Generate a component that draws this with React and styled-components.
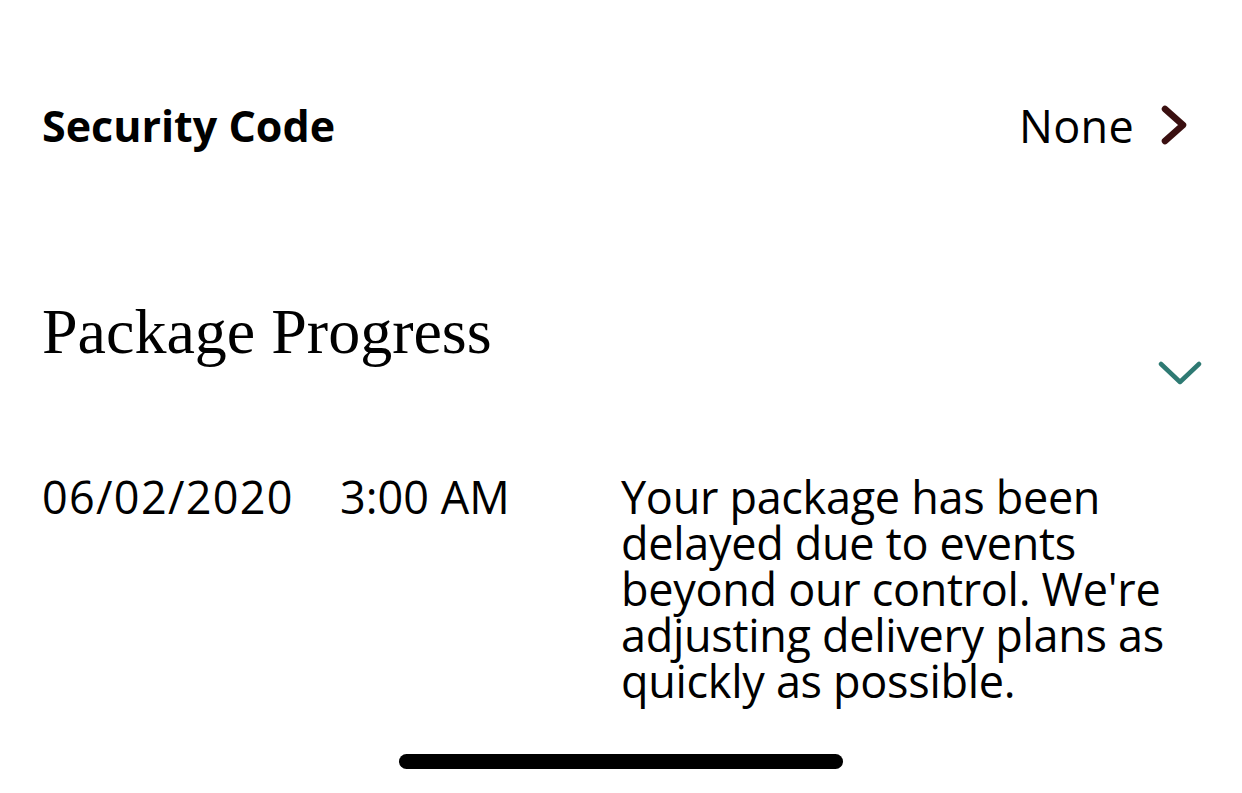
import React from "react";
import styled, { createGlobalStyle } from "styled-components";

const GlobalStyle = createGlobalStyle`
  html, body {
    margin: 0;
    padding: 0;
    background: #ffffff;
  }
  body {
    font-family: "Open Sans", "Noto Sans", sans-serif;
    color: #000000;
  }
`;

const Screen = styled.div`
  width: 1242px;
  height: 793px;
  box-sizing: border-box;
  padding: 0 42px;
  display: flex;
  flex-direction: column;
  overflow: hidden;
  position: relative;
`;

const InfoRow = styled.div`
  display: flex;
  align-items: center;
  justify-content: space-between;
  height: 100px;
  margin-top: 75px;
`;

const InfoLabel = styled.div`
  font-weight: 700;
  font-size: 43px;
`;

const InfoValue = styled.div`
  display: flex;
  align-items: center;
  gap: 24px;
  font-size: 45px;
  letter-spacing: 0.3px;
  padding-right: 10px;
`;

const SectionHeader = styled.div`
  display: flex;
  justify-content: space-between;
  align-items: flex-end;
  margin-top: 120px;
`;

const SectionTitle = styled.h2`
  margin: 0;
  font-family: "Liberation Serif", "DejaVu Serif", serif;
  font-weight: 400;
  font-size: 64px;
`;

const Toggle = styled.div`
  display: flex;
  margin-bottom: -18px;
  margin-right: -2px;
`;

const EventRow = styled.div`
  display: grid;
  grid-template-columns: 298px 281px 1fr;
  margin-top: 105px;
  font-size: 45px;
  line-height: 46px;
`;

const EventCell = styled.div`
  letter-spacing: ${(p) => p.$spacing || "0"};
`;

const HomeIndicator = styled.div`
  position: absolute;
  left: 399px;
  bottom: 24px;
  width: 444px;
  height: 15px;
  border-radius: 8px;
  background: #000000;
`;

const ChevronRight = () => (
  <svg width="32" height="44" viewBox="0 0 32 44">
    <path d="M7 6 L25 22 L7 38" fill="none" stroke="#3a0f10" strokeWidth="6.5" strokeLinecap="round" strokeLinejoin="round" />
  </svg>
);

const ChevronDown = () => (
  <svg width="44" height="28" viewBox="0 0 44 28">
    <path d="M3 5 L22 23 L41 5" fill="none" stroke="#2e7a73" strokeWidth="4.5" strokeLinecap="round" strokeLinejoin="round" />
  </svg>
);

const App = () => {
  return (
    <>
      <GlobalStyle />
      <Screen>
        <InfoRow>
          <InfoLabel>Security Code</InfoLabel>
          <InfoValue>
            None
            <ChevronRight />
          </InfoValue>
        </InfoRow>

        <SectionHeader>
          <SectionTitle>Package Progress</SectionTitle>
          <Toggle>
            <ChevronDown />
          </Toggle>
        </SectionHeader>

        <EventRow>
          <EventCell $spacing="1.3px">06/02/2020</EventCell>
          <EventCell>3:00 AM</EventCell>
          <EventCell $spacing="-0.3px">
            Your package has been delayed due to events beyond our control. We're adjusting delivery plans as quickly as possible.
          </EventCell>
        </EventRow>

        <HomeIndicator />
      </Screen>
    </>
  );
};

export default App;
